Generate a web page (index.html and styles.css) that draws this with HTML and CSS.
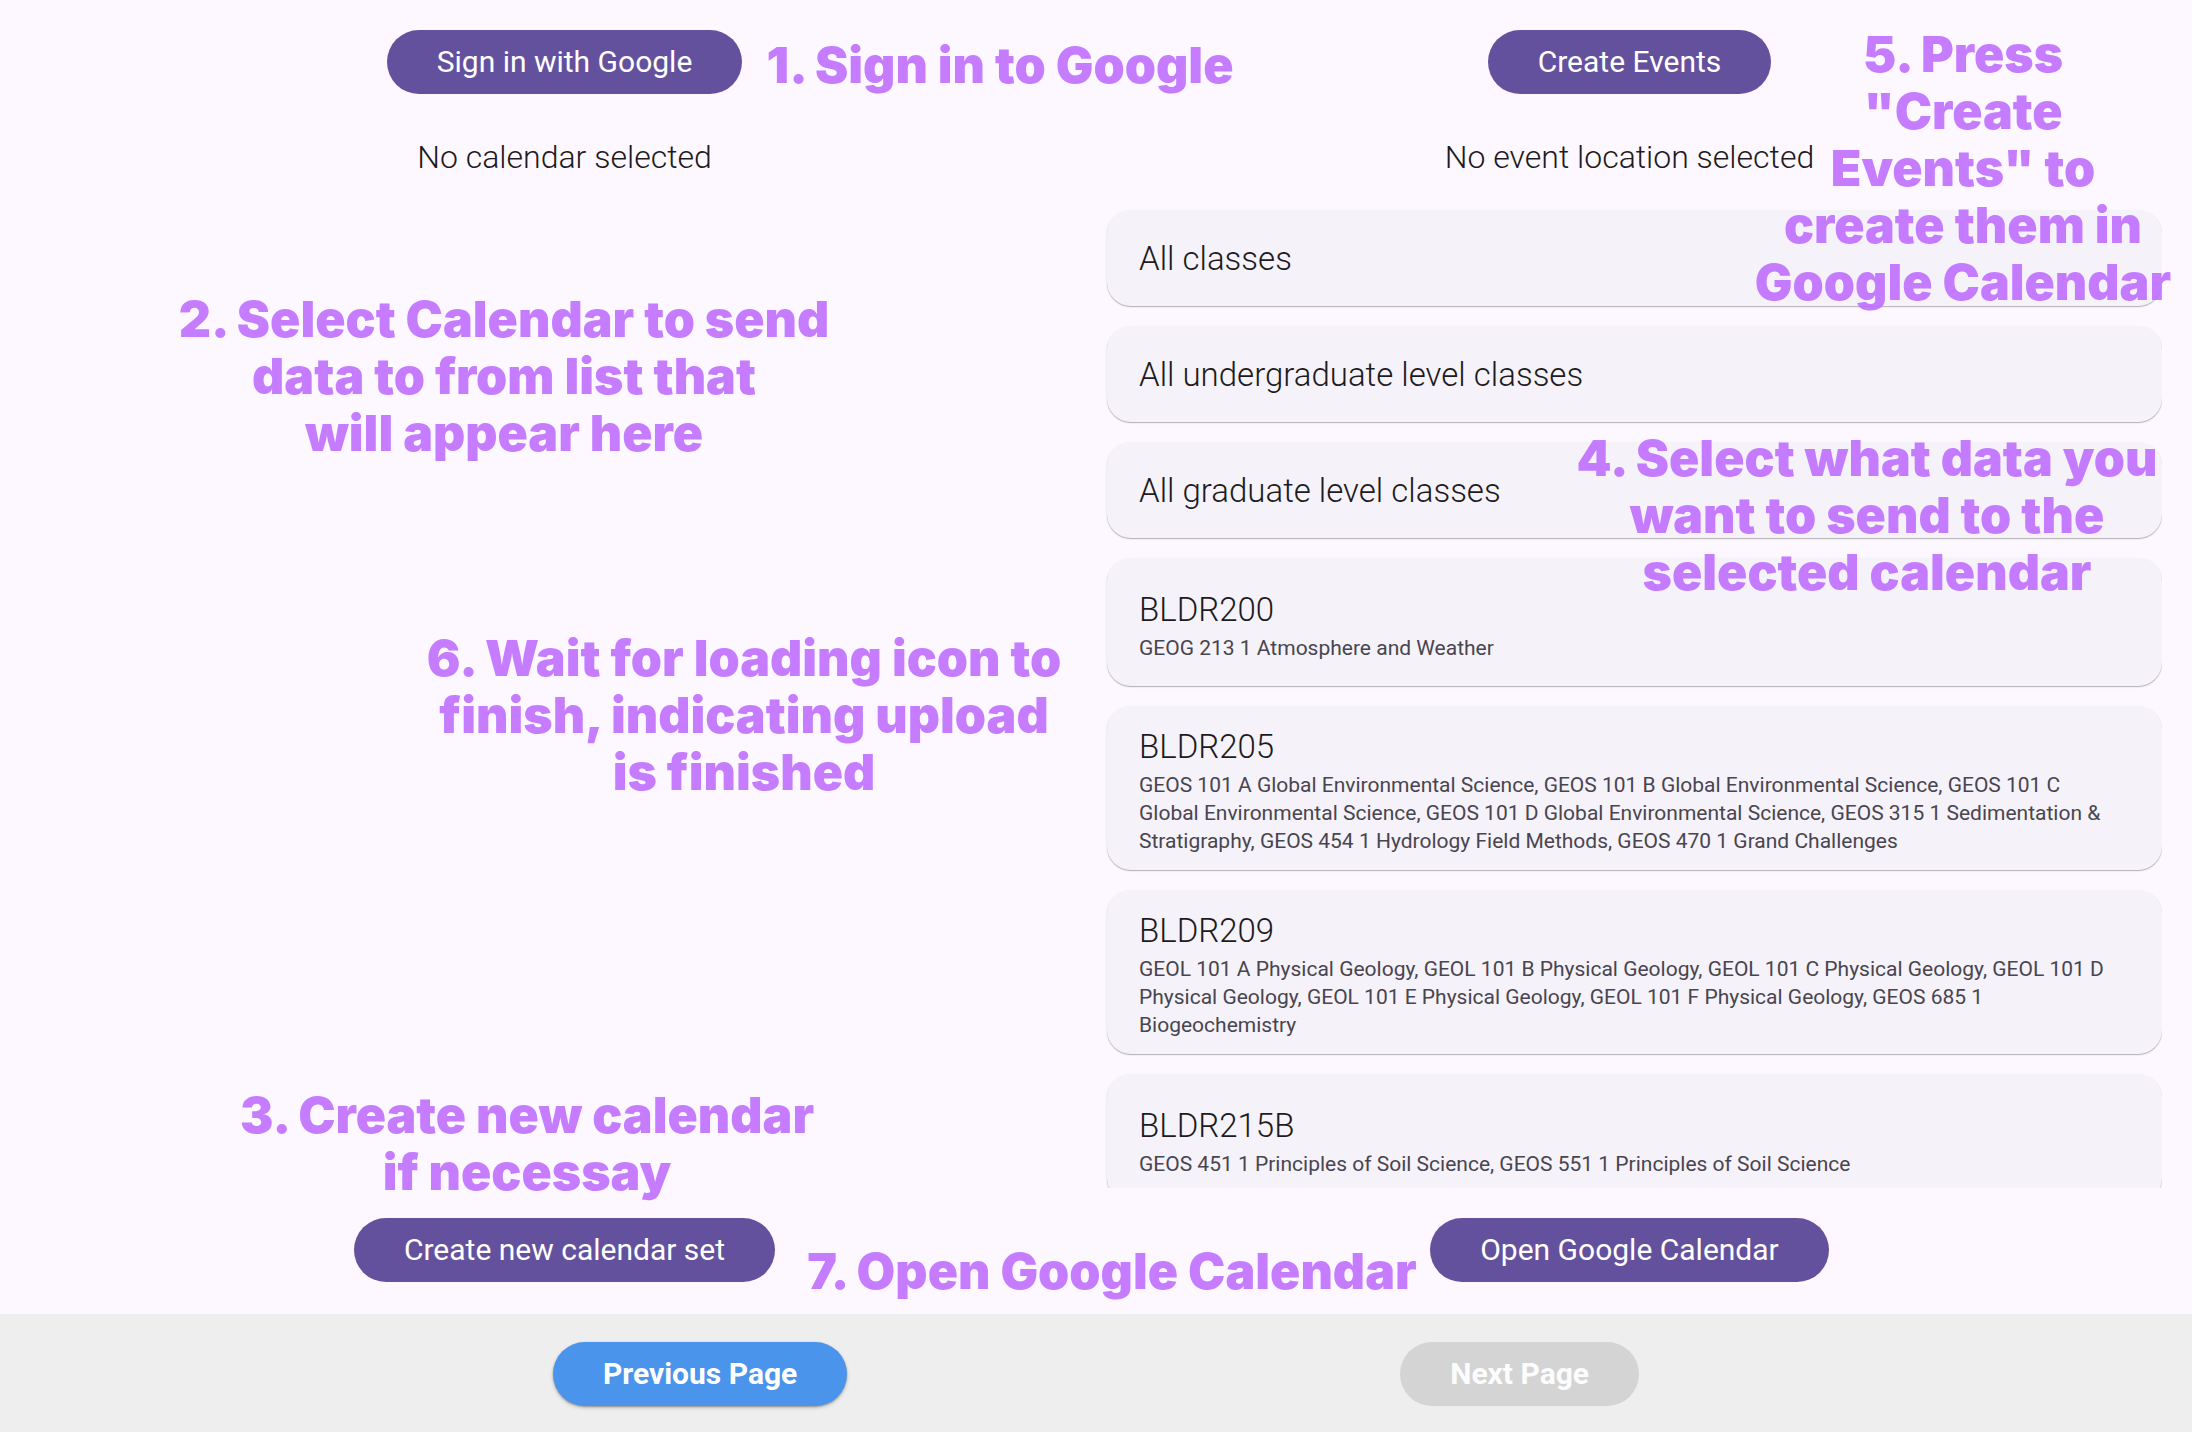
FILE: index.html
```html
<!DOCTYPE html>
<html lang="en">
<head>
<meta charset="utf-8">
<meta name="viewport" content="width=device-width, initial-scale=1">
<title>Send to Google Calendar</title>
<link rel="stylesheet" href="styles.css">
</head>
<body>
<div class="app">
  <main class="content">
    <section class="column">
      <button type="button" class="btn btn-primary">Sign in with Google</button>
      <p class="status">No calendar selected</p>
      <div class="list"></div>
      <button type="button" class="btn btn-primary">Create new calendar set</button>
    </section>
    <section class="column">
      <button type="button" class="btn btn-primary">Create Events</button>
      <p class="status">No event location selected</p>
      <div class="list">
        <button type="button" class="card card-single"><span class="card-title">All classes</span></button>
        <button type="button" class="card card-single"><span class="card-title">All undergraduate level classes</span></button>
        <button type="button" class="card card-single"><span class="card-title">All graduate level classes</span></button>
        <button type="button" class="card"><span class="card-title">BLDR200</span><span class="card-sub">GEOG 213 1 Atmosphere and Weather</span></button>
        <button type="button" class="card card-long"><span class="card-title">BLDR205</span><span class="card-sub">GEOS 101 A Global Environmental Science, GEOS 101 B Global Environmental Science, GEOS 101 C Global Environmental Science, GEOS 101 D Global Environmental Science, GEOS 315 1 Sedimentation &amp; Stratigraphy, GEOS 454 1 Hydrology Field Methods, GEOS 470 1 Grand Challenges</span></button>
        <button type="button" class="card card-long"><span class="card-title">BLDR209</span><span class="card-sub">GEOL 101 A Physical Geology, GEOL 101 B Physical Geology, GEOL 101 C Physical Geology, GEOL 101 D Physical Geology, GEOL 101 E Physical Geology, GEOL 101 F Physical Geology, GEOS 685 1 Biogeochemistry</span></button>
        <button type="button" class="card"><span class="card-title">BLDR215B</span><span class="card-sub">GEOS 451 1 Principles of Soil Science, GEOS 551 1 Principles of Soil Science</span></button>
      </div>
      <button type="button" class="btn btn-primary">Open Google Calendar</button>
    </section>
  </main>
  <footer class="pager">
    <button type="button" class="btn btn-prev">Previous Page</button>
    <button type="button" class="btn btn-next" disabled>Next Page</button>
  </footer>

  <!-- Step-by-step notes laid over the page -->
  <p class="note note-signin">1. Sign in to Google</p>
  <p class="note note-calendar">2. Select Calendar to send<br>data to from list that<br>will appear here</p>
  <p class="note note-create">3. Create new calendar<br>if necessay</p>
  <p class="note note-data">4. Select what data you<br>want to send to the<br>selected calendar</p>
  <p class="note note-events">5. Press<br>"Create<br>Events" to<br>create them in<br>Google Calendar</p>
  <p class="note note-wait">6. Wait for loading icon to<br>finish, indicating upload<br>is finished</p>
  <p class="note note-open">7. Open Google Calendar</p>
</div>
</body>
</html>
```
FILE: styles.css
```css
* {
  box-sizing: border-box;
}

body {
  margin: 0;
  background: #fdf8ff;
  color: #1d1b20;
  font-family: Roboto, "Open Sans", sans-serif;
}

.app {
  position: relative;
  display: flex;
  flex-direction: column;
  height: 100vh;
  overflow: hidden;
}

.content {
  flex: 1;
  min-height: 0;
  display: grid;
  grid-template-columns: 1fr 1fr;
  grid-template-rows: minmax(0, 1fr);
  padding: 30px 30px 32px 32px;
}

.column {
  display: flex;
  flex-direction: column;
  align-items: center;
  min-height: 0;
}

.btn {
  flex: none;
  height: 64px;
  padding: 0 50px;
  border: 0;
  border-radius: 32px;
  font: 400 30px/64px Roboto, "Open Sans", sans-serif;
  color: #fff;
}

.btn-primary {
  background: #64519e;
}

.status {
  margin: 39px 0 29px;
  font-size: 32px;
  font-weight: 300;
  line-height: 48px;
}

.list {
  flex: 1;
  min-height: 0;
  align-self: stretch;
  display: flex;
  flex-direction: column;
  gap: 20px;
  margin-bottom: 30px;
  padding-left: 10px;
  overflow: hidden;
}

.card {
  flex: none;
  display: flex;
  flex-direction: column;
  gap: 4px;
  padding: 32px 48px 24px 32px;
  border: 0;
  border-radius: 24px;
  background: #f5f2fa;
  box-shadow: 0 1px 0 rgba(0, 0, 0, 0.16), 0 1px 2px rgba(0, 0, 0, 0.16);
  color: #1d1b20;
  font-family: inherit;
  text-align: left;
}

.card-single {
  padding-top: 29px;
  padding-bottom: 27px;
}

.card-long {
  padding-top: 21px;
  padding-bottom: 15px;
}

.card-title {
  font-size: 33px;
  font-weight: 300;
  line-height: 40px;
}

.card-sub {
  color: #49454f;
  font-size: 21px;
  line-height: 28px;
}

.pager {
  display: flex;
  justify-content: space-evenly;
  padding: 28px 0 26px;
  background: #eee;
}

.btn-prev,
.btn-next {
  font-weight: 700;
}

.btn-prev {
  background: #4a94ec;
  box-shadow: 0 1px 2px rgba(0, 0, 0, 0.3), 0 2px 4px rgba(0, 0, 0, 0.15);
}

.btn-next {
  background: #d4d4d4;
  color: #fcfcfc;
}

.note {
  position: absolute;
  margin: 0;
  color: rgba(187, 104, 255, 0.86);
  font: 900 50px/57px Inter, "Open Sans", sans-serif;
  text-align: center;
  white-space: nowrap;
  pointer-events: none;
}

.note-signin {
  left: 760px;
  top: 37px;
  width: 480px;
}

.note-calendar {
  left: 174px;
  top: 291px;
  width: 660px;
}

.note-create {
  left: 237px;
  top: 1087px;
  width: 580px;
}

.note-data {
  left: 1567px;
  top: 430px;
  width: 600px;
}

.note-events {
  left: 1753px;
  top: 26px;
  width: 420px;
}

.note-wait {
  left: 424px;
  top: 630px;
  width: 640px;
}

.note-open {
  left: 807px;
  top: 1243px;
  width: 610px;
}
```
